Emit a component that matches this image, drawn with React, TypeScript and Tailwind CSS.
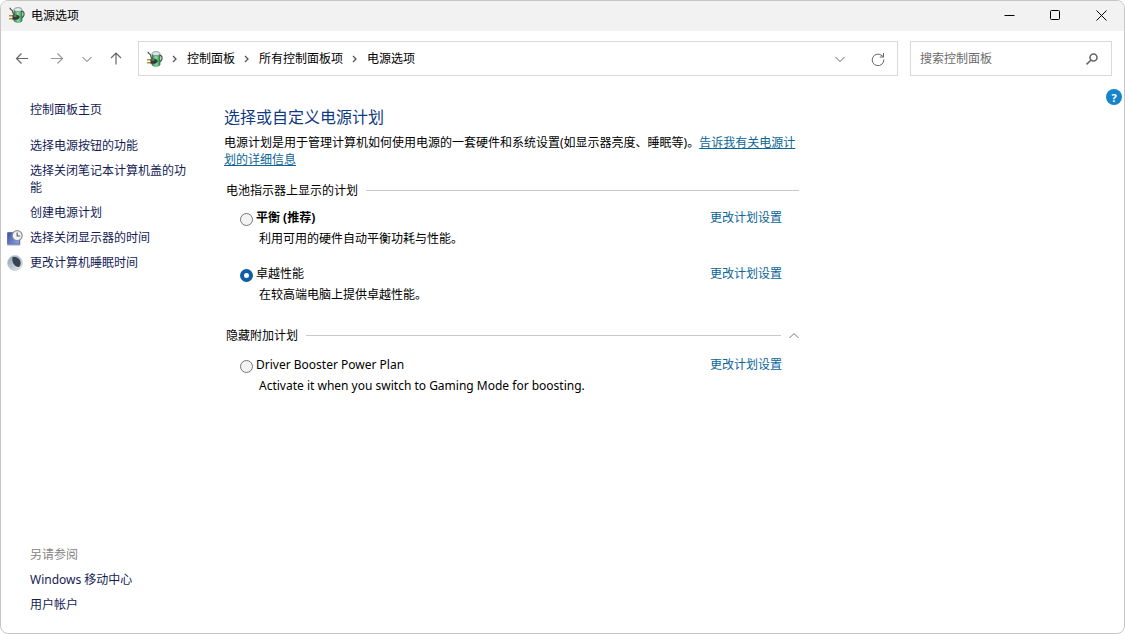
import { useState } from 'react';

const plans = [
  { id: 'balanced', name: '平衡 (推荐)', description: '利用可用的硬件自动平衡功耗与性能。', recommended: true },
  { id: 'ultimate', name: '卓越性能', description: '在较高端电脑上提供卓越性能。' },
];

const extraPlans = [
  {
    id: 'booster',
    name: 'Driver Booster Power Plan',
    description: 'Activate it when you switch to Gaming Mode for boosting.',
  },
];

const tasks = [
  { label: '选择电源按钮的功能' },
  { label: '选择关闭笔记本计算机盖的功能' },
  { label: '创建电源计划' },
  { label: '选择关闭显示器的时间', icon: <DisplayClockIcon /> },
  { label: '更改计算机睡眠时间', icon: <MoonIcon /> },
];

const crumbs = ['控制面板', '所有控制面板项', '电源选项'];

function PowerIcon() {
  return (
    <svg width="16" height="16" viewBox="0 0 16 16" className="shrink-0" aria-hidden="true">
      <defs>
        <linearGradient id="battery" x1="0" x2="1">
          <stop offset="0" stopColor="#2f8a48" />
          <stop offset="0.5" stopColor="#8ee0a0" />
          <stop offset="1" stopColor="#2b8a48" />
        </linearGradient>
      </defs>
      <path d="M12.500 4.500c3.500-.8 3.300 5 0 6.500" fill="none" stroke="#47594e" strokeWidth="1.200" />
      <path d="M5 3v10.500c0 2.300 8 2.300 8 0V3z" fill="url(#battery)" stroke="#2f6b41" strokeWidth=".7" />
      <ellipse cx="9" cy="2.600" rx="4" ry="2" fill="#dfe8f0" stroke="#7b8f86" strokeWidth=".8" />
      <path d="M1 .8c0 2 1.800 1.700 2.400 3 .4 1 .3 2.500 1.600 3.700" fill="none" stroke="#4d4f4e" strokeWidth="1.200" />
      <path d="M0 8.800h4M0 11.700h4" stroke="#b8913c" strokeWidth="1.600" />
      <path d="M3.500 7.800h3.700c1.500 0 2.800.8 3.600 2.200-.7 1.600-1.900 2.700-3.600 2.700H3.500z" fill="#343a37" />
      <path d="M4.500 9h3" stroke="#9ba39e" strokeWidth="1" />
      <path d="M8 14.300h3" stroke="#6fdb86" strokeWidth="1" />
    </svg>
  );
}

function DisplayClockIcon() {
  return (
    <svg width="16" height="16" viewBox="0 0 16 16" className="shrink-0" aria-hidden="true">
      <defs>
        <linearGradient id="screen" x1="0" y1="0" x2="1" y2="1">
          <stop offset="0" stopColor="#3452a4" />
          <stop offset="1" stopColor="#8fa9ed" />
        </linearGradient>
      </defs>
      <path d="M.7 2.700h12v11.500h-12z" fill="url(#screen)" stroke="#575d9c" />
      <path d="M0 15h13.500" stroke="#9da1b3" />
      <circle cx="10.200" cy="5.600" r="5" fill="#f2f3f4" stroke="#8b8f96" strokeWidth="1.200" />
      <path d="M10.200 2.500v3.500h3" fill="none" stroke="#59616c" strokeWidth="1.200" />
    </svg>
  );
}

function MoonIcon() {
  return (
    <svg width="16" height="16" viewBox="0 0 16 16" className="shrink-0" aria-hidden="true">
      <defs>
        <linearGradient id="moon" x1="0" y1="0" x2="1" y2="1">
          <stop offset="0" stopColor="#8f9cab" />
          <stop offset="0.5" stopColor="#b7c5d5" />
          <stop offset="1" stopColor="#edf2f5" />
        </linearGradient>
      </defs>
      <circle cx="8" cy="8" r="7.500" fill="url(#moon)" stroke="#c8ced3" strokeWidth=".8" />
      <path d="M5.500 2.300c3-1.300 7.800.8 8.200 5.300.1 2.200-.6 3.400-1.600 4.300C8.400 12.500 4.300 8 5.500 2.300z" fill="#394453" />
    </svg>
  );
}

function Chevron({ className }: { className?: string }) {
  return (
    <svg width="10" height="10" viewBox="0 0 10 10" className={className} fill="none" stroke="currentColor" aria-hidden="true">
      <path d="M.5 3L5 7.500 9.500 3" />
    </svg>
  );
}

function TitleBar() {
  return (
    <header className="flex h-[30px] items-center bg-[#f2f2f2] pb-0.5 pl-2 text-black">
      <PowerIcon />
      <h1 className="ml-1.5 flex-1">电源选项</h1>
      <button aria-label="最小化" className="flex h-full w-[46px] items-center justify-center">
        <svg width="11" height="11" viewBox="0 0 11 11" stroke="currentColor"><path d="M.5 5.500h10" /></svg>
      </button>
      <button aria-label="最大化" className="flex h-full w-[46px] items-center justify-center">
        <svg width="11" height="11" viewBox="0 0 11 11" fill="none" stroke="currentColor"><rect x=".5" y=".5" width="9" height="9" rx="1" /></svg>
      </button>
      <button aria-label="关闭" className="flex h-full w-[46px] items-center justify-center">
        <svg width="11" height="11" viewBox="0 0 11 11" stroke="currentColor"><path d="M.5.5l10 10M10.500.5l-10 10" /></svg>
      </button>
    </header>
  );
}

function NavBar() {
  return (
    <div className="flex items-center pt-2.5 pr-3 text-[#666]">
      <nav className="flex w-[137px] shrink-0 items-center pl-3.5" aria-label="导航">
        <button aria-label="后退">
          <svg width="14" height="14" viewBox="0 0 14 14" fill="none" stroke="currentColor" strokeWidth="1.200"><path d="M13 6.500H1.500M6.500 1.500l-5 5 5 5" /></svg>
        </button>
        <button aria-label="前进" className="ml-[21px] text-[#999]">
          <svg width="14" height="14" viewBox="0 0 14 14" fill="none" stroke="currentColor" strokeWidth="1.200"><path d="M1 6.500h11.500M7.500 1.500l5 5-5 5" /></svg>
        </button>
        <button aria-label="最近的位置" className="ml-[18px]">
          <Chevron />
        </button>
        <button aria-label="上移" className="ml-[17px]">
          <svg width="14" height="14" viewBox="0 0 14 14" fill="none" stroke="currentColor" strokeWidth="1.200"><path d="M7 12.500V1M2 6l5-5 5 5" /></svg>
        </button>
      </nav>
      <div className="flex h-[35px] flex-1 items-center border border-[#d9d9d9] pr-3 pl-2">
        <PowerIcon />
        <ol className="flex flex-1 items-center text-black">
          {crumbs.map((crumb) => (
            <li key={crumb} className="flex items-center">
              <span className="flex w-6 justify-center text-[#555]">
                <svg width="6" height="8" viewBox="0 0 6 8" fill="none" stroke="currentColor" strokeWidth="1.300" aria-hidden="true"><path d="M1 1l3 3-3 3" /></svg>
              </span>
              <a href="#">{crumb}</a>
            </li>
          ))}
        </ol>
        <button aria-label="以前的位置">
          <Chevron />
        </button>
        <button aria-label="刷新" className="ml-[26px]">
          <svg width="14" height="14" viewBox="0 0 14 14" fill="none" stroke="currentColor"><path d="M12.800 7.500A5.800 5.800 0 1 1 11 3.700L12.500 4.900M12.500 1v4H8.800" /></svg>
        </button>
      </div>
      <label className="ml-3 flex h-[35px] w-[202px] items-center border border-[#d9d9d9] pr-[11px] pl-[9px]">
        <input type="search" aria-label="搜索控制面板" placeholder="搜索控制面板" className="min-w-0 flex-1 outline-none placeholder:text-[#6b6b6b]" />
        <svg width="16" height="12" viewBox="0 0 16 12" fill="none" stroke="#666" strokeWidth="1.600" aria-hidden="true">
          <circle cx="9.500" cy="4.500" r="3.500" />
          <path d="M7 7l-4.500 4.300" />
        </svg>
      </label>
    </div>
  );
}

function Sidebar() {
  return (
    <aside className="flex w-[223px] shrink-0 flex-col pt-[25px] pb-5 text-[#151c55]">
      <a href="#" className="ml-[29px] self-start">控制面板主页</a>
      <ul className="mt-[19px] flex w-[189px] flex-col gap-2">
        {tasks.map(({ label, icon }) => (
          <li key={label} className="flex items-center pl-1.5">
            <span className="w-[23px] shrink-0">{icon}</span>
            <a href="#">{label}</a>
          </li>
        ))}
      </ul>
      <div className="mt-auto ml-[29px] flex flex-col items-start gap-2">
        <h2 className="text-[#858585]">另请参阅</h2>
        <a href="#">Windows 移动中心</a>
        <a href="#">用户帐户</a>
      </div>
    </aside>
  );
}

type PlanProps = {
  id: string;
  name: string;
  description: string;
  recommended?: boolean;
  checked: boolean;
  onSelect: (id: string) => void;
};

function PlanRow({ id, name, description, recommended, checked, onSelect }: PlanProps) {
  return (
    <div className="pr-[17px] pl-4">
      <div className="flex items-center">
        <input
          type="radio"
          name="plan"
          id={id}
          checked={checked}
          onChange={() => onSelect(id)}
          className="mt-1 h-[13px] w-[13px] appearance-none rounded-full border border-[#777] bg-[#f3f3f3] checked:border-4 checked:border-[#0f5da5] checked:bg-white"
        />
        <label htmlFor={id} className={recommended ? 'ml-[3px] flex-1 font-bold' : 'ml-[3px] flex-1'}>
          {name}
        </label>
        <a href="#" className="text-[#0b6596]">更改计划设置</a>
      </div>
      <p className="mt-1 pl-[19px]">{description}</p>
    </div>
  );
}

function PlanSettings() {
  const [selected, setSelected] = useState('ultimate');
  const [expanded, setExpanded] = useState(true);

  return (
    <main className="max-w-[575px] min-w-0 flex-1 pt-[29px] text-black">
      <h2 className="text-base leading-6 text-[#123a80]">选择或自定义电源计划</h2>
      <p className="mt-[5px]">
        电源计划是用于管理计算机如何使用电源的一套硬件和系统设置(如显示器亮度、睡眠等)。<a href="#" className="text-[#0b6596] underline">告诉我有关电源计划的详细信息</a>
      </p>
      <section className="mt-3.5">
        <div className="flex items-center gap-2 pl-0.5">
          <h3>电池指示器上显示的计划</h3>
          <div className="h-px flex-1 bg-[#c8c8c8]" />
        </div>
        <div className="mt-2.5 flex flex-col gap-[18px]">
          {plans.map((plan) => (
            <PlanRow key={plan.id} {...plan} checked={selected === plan.id} onSelect={setSelected} />
          ))}
        </div>
      </section>
      <section className="mt-6">
        <div className="flex items-center gap-2 pl-0.5">
          <h3>隐藏附加计划</h3>
          <div className="h-px flex-1 bg-[#c8c8c8]" />
          <button aria-label="隐藏附加计划" aria-expanded={expanded} onClick={() => setExpanded(!expanded)} className="text-[#777]">
            <Chevron className={expanded ? 'rotate-180' : ''} />
          </button>
        </div>
        {expanded && (
          <div className="mt-3">
            {extraPlans.map((plan) => (
              <PlanRow key={plan.id} {...plan} checked={selected === plan.id} onSelect={setSelected} />
            ))}
          </div>
        )}
      </section>
    </main>
  );
}

export default function App() {
  return (
    <div className="flex min-h-screen flex-col overflow-hidden rounded-lg border border-[#c6c6c6] bg-white font-['Noto_Sans','Noto_Sans_CJK_SC',sans-serif] text-xs leading-[17px]" lang="zh-CN">
      <TitleBar />
      <NavBar />
      <div className="flex flex-1">
        <Sidebar />
        <PlanSettings />
        <button aria-label="帮助" className="mt-[13px] mr-0.5 ml-auto flex h-4 w-4 shrink-0 items-center justify-center rounded-full bg-[#1683ca] text-[11px] font-bold text-white">
          ?
        </button>
      </div>
    </div>
  );
}
